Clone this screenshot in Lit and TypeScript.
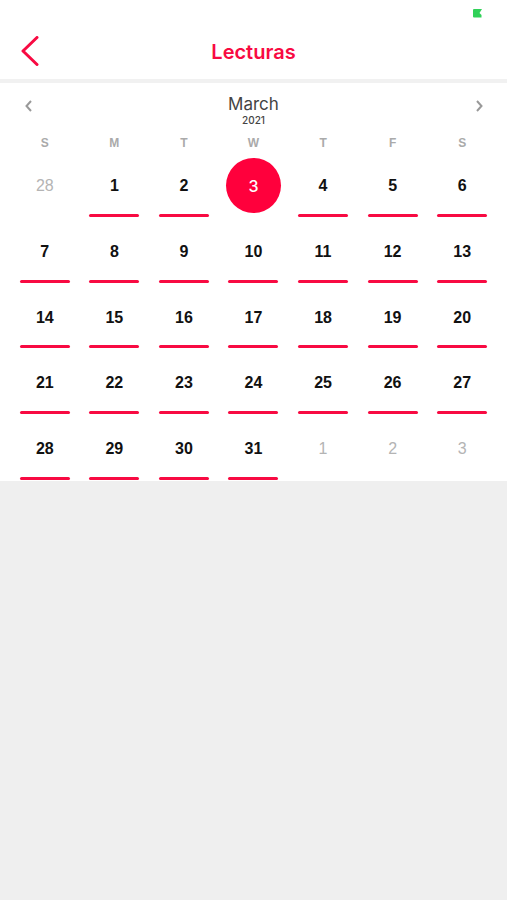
import { LitElement, html, css } from "lit";
import { customElement, state } from "lit/decorators.js";
import { classMap } from "lit/directives/class-map.js";

interface Day {
  id: number;
  day: number;
  outside: boolean;
}

const WEEKDAYS = ["S", "M", "T", "W", "T", "F", "S"];

const DAYS: Day[] = Array.from({ length: 35 }, (_, i) => {
  const date = new Date(2021, 1, 28 + i);
  return { id: i, day: date.getDate(), outside: date.getMonth() !== 2 };
});

@customElement("month-calendar")
export class MonthCalendar extends LitElement {
  static styles = css`
    :host {
      display: block;
      background: #fff;
      padding: 8px 10px 1px;
    }
    .month {
      display: flex;
      justify-content: space-between;
      align-items: flex-start;
      height: 44px;
    }
    .arrow {
      display: flex;
      align-items: center;
      justify-content: center;
      width: 36px;
      height: 30px;
      padding: 0;
      border: 0;
      background: none;
      color: #999;
      cursor: pointer;
    }
    .heading {
      margin: 0;
      padding-top: 3px;
      text-align: center;
      font-weight: 400;
      color: #444;
    }
    .name {
      display: block;
      font-size: 17px;
      line-height: 20px;
    }
    .year {
      display: block;
      font-size: 10px;
      line-height: 12px;
      font-weight: 500;
    }
    table,
    .weekdays {
      display: block;
    }
    .row {
      display: grid;
      grid-template-columns: repeat(7, 1fr);
    }
    .days {
      display: grid;
      grid-auto-rows: 1fr;
      height: 329px;
    }
    th {
      padding: 0;
      font: 700 12px/16px "Liberation Sans", Arial, sans-serif;
      color: #aaa;
    }
    td {
      display: flex;
      flex-direction: column;
      align-items: center;
      justify-content: space-between;
      padding: 7px 0 0;
    }
    .day {
      width: 55px;
      height: 55px;
      padding: 0;
      border: 0;
      border-radius: 50%;
      background: none;
      color: #111;
      font: 700 16px/56px "Liberation Sans", Arial, sans-serif;
      cursor: pointer;
    }
    .outside {
      color: #b4b4b4;
      font-weight: 400;
    }
    .selected {
      background: #ff003c;
      color: #fff;
      font-family: Inter, sans-serif;
      font-weight: 500;
    }
    .mark {
      width: 50px;
      height: 3px;
      border-radius: 2px;
      background: #f80a42;
    }
  `;

  @state() private selected = 3;

  render() {
    const weeks = [0, 1, 2, 3, 4].map((w) => DAYS.slice(w * 7, w * 7 + 7));
    return html`
      <div class="month">
        <button class="arrow" aria-label="Previous month">
          <svg width="8" height="12" viewBox="0 0 8 12" fill="none" stroke="currentColor" stroke-width="2">
            <path d="M7 1 L2.5 6 L7 11" />
          </svg>
        </button>
        <h2 class="heading"><span class="name">March</span><span class="year">2021</span></h2>
        <button class="arrow" aria-label="Next month">
          <svg width="8" height="12" viewBox="0 0 8 12" fill="none" stroke="currentColor" stroke-width="2">
            <path d="M2 1 L6.5 6 L2 11" />
          </svg>
        </button>
      </div>
      <table>
        <thead class="weekdays">
          <tr class="row">${WEEKDAYS.map((d) => html`<th scope="col">${d}</th>`)}</tr>
        </thead>
        <tbody class="days">
          ${weeks.map(
            (week) => html`<tr class="row">${week.map((d) => this.cell(d))}</tr>`
          )}
        </tbody>
      </table>
    `;
  }

  private cell(d: Day) {
    const selected = d.id === this.selected;
    return html`<td>
      <button
        class=${classMap({ day: true, outside: d.outside, selected })}
        aria-pressed=${selected}
        @click=${() => (this.selected = d.id)}
      >${d.day}</button>
      ${d.outside || selected ? null : html`<span class="mark"></span>`}
    </td>`;
  }
}

@customElement("app-root")
export class AppRoot extends LitElement {
  static styles = css`
    :host {
      display: block;
      min-height: 100vh;
      background: #efefef;
      font-family: Inter, sans-serif;
    }
    .status {
      display: flex;
      justify-content: flex-end;
      padding: 9px 25px 0 0;
      height: 15px;
    }
    .top {
      background: #fff;
      border-bottom: 4px solid #f1f1f1;
    }
    .bar {
      display: grid;
      grid-template-columns: 60px 1fr 60px;
      align-items: center;
      height: 55px;
    }
    .back {
      display: flex;
      align-items: center;
      align-self: start;
      justify-content: center;
      height: 53px;
      padding: 0;
      border: 0;
      background: none;
      color: #f80a42;
      cursor: pointer;
    }
    .title {
      margin: 0;
      text-align: center;
      color: #f80a42;
      font-size: 20px;
      line-height: 24px;
      font-weight: 600;
    }
  `;

  render() {
    return html`
      <header class="top">
        <div class="status">
          <svg width="9" height="9" viewBox="0 0 9 9" aria-hidden="true">
            <path d="M1 0 H9 L6.5 4 L8.5 6 V8.5 H1 Q0 8.5 0 7.5 V1 Q0 0 1 0 Z" fill="#30d158" />
          </svg>
        </div>
        <div class="bar">
          <button class="back" aria-label="Back">
            <svg width="18" height="30" viewBox="0 0 18 30" fill="none" stroke="currentColor" stroke-width="3" stroke-linecap="round" stroke-linejoin="round">
              <path d="M16 1.5 L2 15 L16 28.5" />
            </svg>
          </button>
          <h1 class="title">Lecturas</h1>
        </div>
      </header>
      <month-calendar></month-calendar>
    `;
  }
}
